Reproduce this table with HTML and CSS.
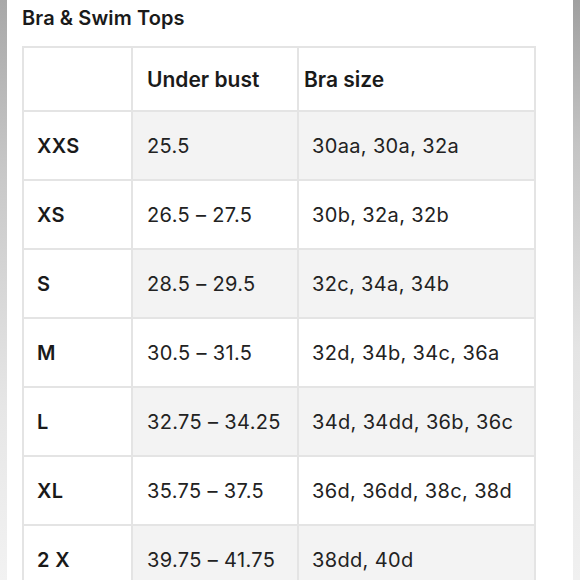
FILE: index.html
```html
<!DOCTYPE html>
<html>
<head>
<meta charset="utf-8">
<link rel="stylesheet" href="styles.css">
</head>
<body>
<div class="frame">
  <div class="edge edge-left"></div>
  <main class="content">
    <h1 class="title">Bra &amp; Swim Tops</h1>
    <table class="chart">
      <colgroup>
        <col class="c1"><col class="c2"><col class="c3">
      </colgroup>
      <thead>
        <tr><th class="corner"></th><th class="h2">Under bust</th><th class="h3">Bra size</th></tr>
      </thead>
      <tbody>
        <tr class="alt"><th>XXS</th><td>25.5</td><td class="bra">30aa, 30a, 32a</td></tr>
        <tr><th>XS</th><td>26.5 – 27.5</td><td class="bra">30b, 32a, 32b</td></tr>
        <tr class="alt"><th>S</th><td>28.5 – 29.5</td><td class="bra">32c, 34a, 34b</td></tr>
        <tr><th>M</th><td>30.5 – 31.5</td><td class="bra">32d, 34b, 34c, 36a</td></tr>
        <tr class="alt"><th>L</th><td>32.75 – 34.25</td><td class="bra">34d, 34dd, 36b, 36c</td></tr>
        <tr><th>XL</th><td>35.75 – 37.5</td><td class="bra">36d, 36dd, 38c, 38d</td></tr>
        <tr class="alt"><th>2 X</th><td>39.75 – 41.75</td><td class="bra">38dd, 40d</td></tr>
      </tbody>
    </table>
  </main>
  <div class="edge edge-right"></div>
</div>
</body>
</html>
```

FILE: styles.css
```css
* { box-sizing: border-box; }
html, body {
  margin: 0;
  padding: 0;
  width: 580px;
  height: 580px;
  overflow: hidden;
  background: #ffffff;
}
body {
  font-family: Inter, "Noto Sans", sans-serif;
  color: #1a1a1a;
}
.frame {
  display: flex;
  height: 580px;
}
.edge {
  width: 7px;
  flex: none;
}
.edge-left {
  background: linear-gradient(to bottom, #a8a8a8 0%, #c8c8c8 30%, #e6e6e6 70%, #f2f2f2 100%);
}
.edge-right {
  background: linear-gradient(to bottom, #a0a0a0 0%, #c4c4c4 25%, #e4e4e4 60%, #f0f0f0 100%);
}
.content {
  flex: 1;
  padding: 5px 0 0 15px;
  overflow: hidden;
}
.title {
  margin: 0 0 15px;
  font-size: 20px;
  font-weight: 600;
  line-height: 26px;
  letter-spacing: 0.1px;
}
.chart {
  border-collapse: collapse;
  width: 512px;
  table-layout: fixed;
  font-size: 20px;
  letter-spacing: 0.35px;
}
.c1 { width: 109px; }
.c2 { width: 166px; }
.c3 { width: 237px; }
.chart th, .chart td {
  border: 2px solid #e4e4e4;
  height: 69px;
  vertical-align: middle;
  text-align: left;
  padding: 0 0 0 13px;
  font-weight: 400;
}
.chart th {
  font-weight: 600;
}
.chart thead th {
  height: 64px;
  font-size: 21px;
  font-weight: 600;
  letter-spacing: 0px;
}
.chart thead .h2 { padding-left: 14px; }
.chart thead .h3 { padding-left: 5px; }
.chart td { padding-left: 14px; color: #222; }
.chart td.bra { padding-left: 13px; }
.chart tr.alt td {
  background: #f3f3f3;
}
```
